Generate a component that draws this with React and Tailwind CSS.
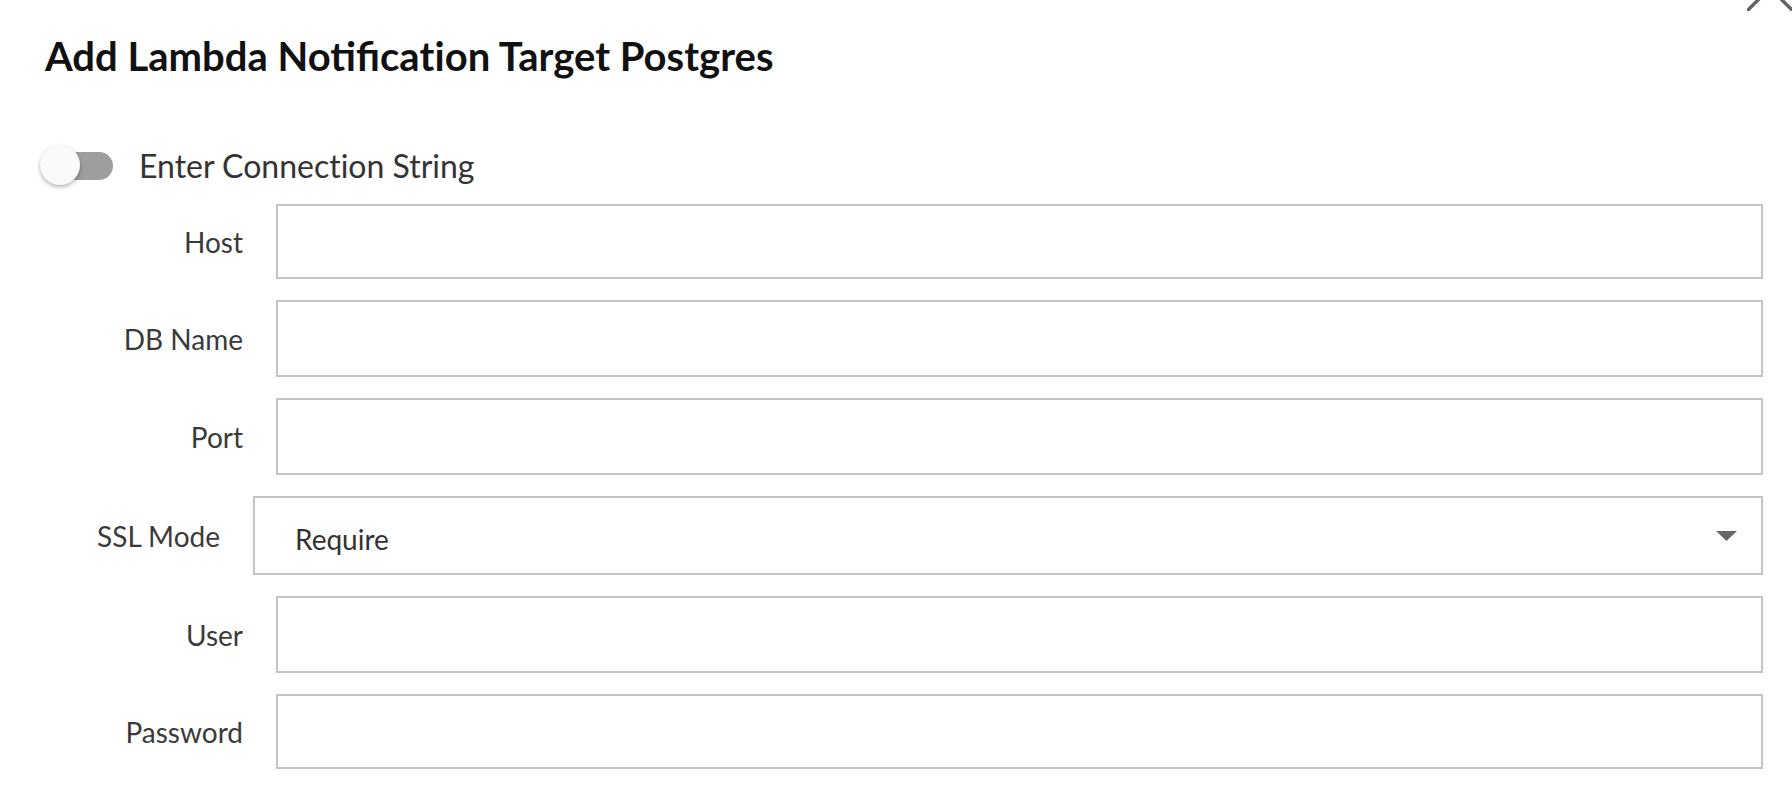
import React from "react";

function Field({ label, h }) {
  return (
    <div className={"flex items-center " + h}>
      <div className="w-[198px] text-right text-[28px] leading-none text-[#3a3a3a]">{label}</div>
      <div className="ml-[33px] h-full flex-1 border-2 border-[#c4c4c4] bg-white" />
    </div>
  );
}

export default function App() {
  return (
    <div className="relative h-[786px] w-full overflow-hidden bg-white font-['Lato',sans-serif] text-[#333]">
      <button className="absolute right-[-1px] top-[-35px]" aria-label="Close">
        <svg width="46" height="46" viewBox="0 0 46 46">
          <path d="M1 1 L45 45 M45 1 L1 45" stroke="#666" strokeWidth="3.5" strokeLinecap="round" fill="none" />
        </svg>
      </button>
      <div className="pl-[45px] pr-[29px]">
        <h1 className="pt-[36px] text-[40px] font-bold leading-none text-[#111]">
          Add Lambda Notifica<span className="[font-variant-ligatures:none]">tion</span> Target Postgres
        </h1>
        <div className="mt-[69px] flex h-[40px] items-center">
          <div className="relative ml-[-5px] h-[40px] w-[73px]">
            <div className="absolute left-[12px] top-[7px] h-[28px] w-[61px] rounded-full bg-[#9e9e9e]" />
            <div className="absolute left-0 top-0 h-[40px] w-[40px] rounded-full bg-[#fafafa] shadow-[0_2px_4px_rgba(0,0,0,0.3)]" />
          </div>
          <span className="ml-[26px] pt-[2px] text-[32px] leading-none text-[#333] [font-variant-ligatures:none]">Enter Connection String</span>
        </div>
        <div className="mt-[19px] flex flex-col gap-[21px]">
          <Field label="Host" h="h-[75px]" />
          <Field label="DB Name" h="h-[77px]" />
          <Field label="Port" h="h-[77px]" />
          <div className="flex h-[79px] items-center">
            <div className="w-[175px] text-right text-[28px] leading-none text-[#3a3a3a]">SSL Mode</div>
            <div className="ml-[33px] flex h-full flex-1 items-center justify-between border-2 border-[#c4c4c4] bg-white pl-[40px] pr-[24px]">
              <span className="pt-[6px] text-[28px] leading-none text-[#333]">Require</span>
              <svg width="21" height="10" viewBox="0 0 21 10">
                <path d="M0 0 L21 0 L10.5 10 Z" fill="#666" />
              </svg>
            </div>
          </div>
          <Field label="User" h="h-[77px]" />
          <Field label="Password" h="h-[75px]" />
        </div>
      </div>
    </div>
  );
}
